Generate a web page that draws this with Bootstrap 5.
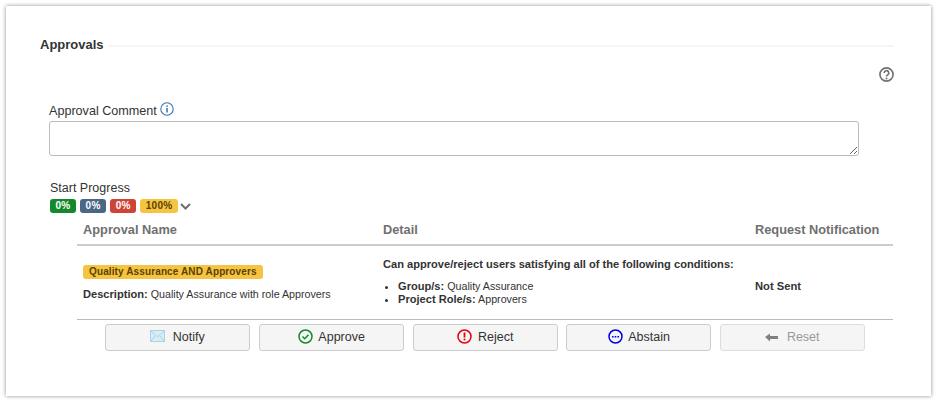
<!DOCTYPE html>
<html lang="en">
<head>
    <meta charset="UTF-8">
    <meta name="viewport" content="width=device-width, initial-scale=1.0">
    <title>Approvals</title>
    <link rel="stylesheet" href="https://cdn.jsdelivr.net/npm/bootstrap@5.3.2/dist/css/bootstrap.min.css">
    <style>
        body {
            background: #fff;
            font-family: "Liberation Sans", Arial, sans-serif;
            color: #333;
            overflow: hidden;
        }
        .sheet {
            width: 925px;
            height: 390px;
            margin: 6px;
            padding: 30px 37px 0 34px;
            background: #fff;
            box-shadow: 0 0 4px rgba(0, 0, 0, 0.45);
        }
        .sheet-title {
            font-size: 13px;
            font-weight: 700;
            line-height: 18px;
        }
        .sheet-rule {
            border-top: 2px solid #f5f5f5;
            margin-top: 2px;
        }
        .help-row {
            height: 14px;
            margin-top: 13px;
            line-height: 0;
        }
        .comment-block {
            padding: 0 35px 0 9px;
            margin-top: 21px;
        }
        .comment-label {
            font-size: 12.6px;
            line-height: 18px;
            height: 19px;
            color: #333;
        }
        .comment-label svg {
            vertical-align: -1px;
        }
        .comment-box {
            display: block;
            width: 100%;
            height: 35px;
            border: 1px solid #bbb;
            border-radius: 3px;
            padding: 4px 6px;
            font-size: 13px;
        }
        .progress-block {
            margin: 22px 0 0 10px;
        }
        .progress-label {
            font-size: 12.5px;
            line-height: 20px;
            height: 21px;
        }
        .pill {
            font-size: 10px;
            font-weight: 700;
            line-height: 14px;
            height: 14px;
            padding: 0 5.5px;
            border-radius: 3px;
            color: #fff;
            letter-spacing: 0.3px;
        }
        .pill-green { background: #14892c; }
        .pill-blue { background: #4a6785; }
        .pill-red { background: #d04437; }
        .pill-amber { background: #f6c342; color: #594300; }
        .chevron {
            margin-left: -2px;
        }
        .approval-table {
            width: 816px;
            margin: 1px 0 0 37px;
            table-layout: fixed;
            border-collapse: collapse;
        }
        .approval-table th {
            font-size: 12.8px;
            font-weight: 700;
            color: #707070;
            height: 31px;
            padding: 2px 6px 0;
            border-bottom: 2px solid #ccc;
        }
        .approval-table td {
            font-size: 10.7px;
            vertical-align: middle;
            height: 74px;
            padding: 0 6px 1px;
            border-bottom: 1px solid #bbb;
        }
        .approval-table b {
            font-size: 11.1px;
        }
        .approval-table ul {
            margin: 9px 0 0;
            padding-left: 15px;
            line-height: 13px;
        }
        .strong-line {
            font-size: 11.1px;
            font-weight: 700;
            line-height: 14px;
        }
        .desc-line {
            margin-top: 8px;
            line-height: 14px;
        }
        .wide-pill {
            display: inline-block;
            padding: 0 6px;
            letter-spacing: 0.12px;
            margin-top: 2px;
        }
        .approval-table .sent-cell {
            font-size: 11.2px;
            font-weight: 700;
            padding: 8px 6px 0;
        }
        .act-btn {
            width: 145px;
            height: 27px;
            padding: 0;
            font-size: 12.5px;
            line-height: 25px;
            color: #333;
            background: #f5f5f5;
            border: 1px solid #ccc;
            border-radius: 3px;
        }
        .act-btn svg {
            vertical-align: -3px;
            margin-right: 3px;
        }
        .act-btn:disabled {
            color: #999;
            background: #f5f5f5;
            border-color: #ddd;
            opacity: 1;
        }
        .act-row {
            width: 816px;
            margin: 4px 0 0 37px;
            gap: 8.75px;
        }
    </style>
</head>
<body>
<div class="sheet">
    <div class="d-flex align-items-center gap-1">
        <div class="sheet-title">Approvals</div>
        <div class="sheet-rule flex-grow-1"></div>
    </div>
    <div class="help-row text-end">
        <svg width="15" height="15" viewBox="0 0 15 15"><circle cx="7.5" cy="7.5" r="6.6" fill="none" stroke="#707070" stroke-width="1.6"/><path d="M5.2 6a2.3 2.3 0 1 1 3.5 1.9c-.8.5-1.2.9-1.2 1.6" fill="none" stroke="#707070" stroke-width="1.6"/><circle cx="7.5" cy="11.4" r="1" fill="#707070"/></svg>
    </div>
    <div class="comment-block">
        <div class="comment-label">Approval Comment
            <svg width="14" height="14" viewBox="0 0 14 14"><circle cx="7" cy="7" r="6.2" fill="none" stroke="#3b73af" stroke-width="1.1"/><rect x="6.3" y="6" width="1.5" height="4.5" fill="#3b73af"/><rect x="6.3" y="3.4" width="1.5" height="1.5" fill="#3b73af"/></svg>
        </div>
        <textarea class="comment-box"></textarea>
    </div>
    <div class="progress-block">
        <div class="progress-label">Start Progress</div>
        <div class="d-flex align-items-center" style="gap:4px">
            <span class="pill pill-green">0%</span>
            <span class="pill pill-blue">0%</span>
            <span class="pill pill-red">0%</span>
            <span class="pill pill-amber">100%</span>
            <svg class="chevron" width="11" height="7" viewBox="0 0 11 7"><path d="M1 1l4.5 4.5L10 1" fill="none" stroke="#707070" stroke-width="2"/></svg>
        </div>
    </div>
    <table class="approval-table">
        <colgroup><col style="width:300px"><col style="width:372px"><col style="width:144px"></colgroup>
        <thead>
            <tr><th>Approval Name</th><th>Detail</th><th>Request Notification</th></tr>
        </thead>
        <tbody>
            <tr>
                <td>
                    <span class="pill pill-amber wide-pill">Quality Assurance AND Approvers</span>
                    <div class="desc-line"><b>Description:</b> Quality Assurance with role Approvers</div>
                </td>
                <td>
                    <div class="strong-line">Can approve/reject users satisfying all of the following conditions:</div>
                    <ul>
                        <li><b>Group/s:</b> Quality Assurance</li>
                        <li><b>Project Role/s:</b> Approvers</li>
                    </ul>
                </td>
                <td class="sent-cell">Not Sent</td>
            </tr>
        </tbody>
    </table>
    <div class="act-row d-flex justify-content-center">
        <button class="btn act-btn" type="button">
            <svg width="15" height="12" viewBox="0 0 15 12" style="vertical-align:-1px;margin-right:4px"><rect x=".5" y=".5" width="14" height="11" fill="#d8ecf5" stroke="#a9d3e6"/><path d="M.5.5L7.5 7l7-6.5M.5 11.5l5-6M14.5 11.5l-5-6" fill="none" stroke="#a9d3e6"/></svg>
            Notify
        </button>
        <button class="btn act-btn" type="button">
            <svg width="15" height="15" viewBox="0 0 15 15"><circle cx="7.5" cy="7.5" r="6.5" fill="none" stroke="#14892c" stroke-width="1.5"/><path d="M4.5 7.5l2.2 2.2 3.8-4" fill="none" stroke="#14892c" stroke-width="1.5"/></svg>
            Approve
        </button>
        <button class="btn act-btn" type="button">
            <svg width="15" height="15" viewBox="0 0 15 15"><circle cx="7.5" cy="7.5" r="6.5" fill="none" stroke="#e60012" stroke-width="1.5"/><rect x="6.6" y="3.5" width="1.8" height="5" fill="#e60012"/><rect x="6.6" y="9.6" width="1.8" height="1.8" fill="#e60012"/></svg>
            Reject
        </button>
        <button class="btn act-btn" type="button">
            <svg width="15" height="15" viewBox="0 0 15 15"><circle cx="7.5" cy="7.5" r="6.5" fill="none" stroke="#0000e6" stroke-width="1.5"/><path d="M4 7h1.6v1.5H4zM6.7 7h1.6v1.5H6.7zM9.4 7H11v1.5H9.4z" fill="#0000e6"/></svg>
            Abstain
        </button>
        <button class="btn act-btn" type="button" disabled>
            <svg width="13" height="9" viewBox="0 0 13 9" style="vertical-align:-1px;margin-right:5px"><path d="M0 4L5 .5V3h8v3H5v2.5z" fill="#808080"/></svg>
            Reset
        </button>
    </div>
</div>
<script src="https://cdn.jsdelivr.net/npm/bootstrap@5.3.2/dist/js/bootstrap.bundle.min.js"></script>
</body>
</html>
